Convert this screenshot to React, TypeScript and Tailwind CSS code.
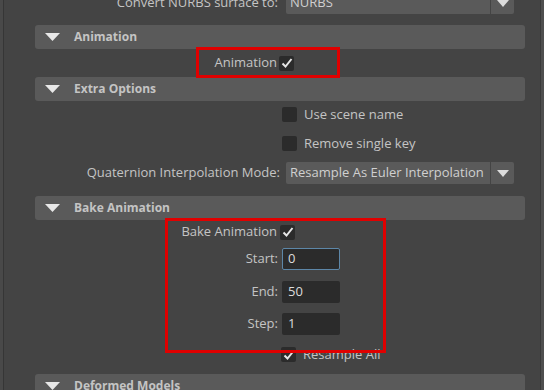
import * as React from "react";

const Check: React.FC<{ checked?: boolean }> = ({ checked }) => (
  <div className="w-[15px] h-[15px] shrink-0 rounded-[2px] bg-[#2b2b2b] flex items-center justify-center">
    {checked && (
      <svg width="12" height="12" viewBox="0 0 12 12">
        <path d="M1.5 6.5 L4.5 9.5 L10.5 2" stroke="#e6e6e6" strokeWidth="2" fill="none" />
      </svg>
    )}
  </div>
);

const Header: React.FC<{ title: string }> = ({ title }) => (
  <div className="h-[24px] bg-[#5a5a5a] rounded-[3px] flex items-center ml-[31px] mr-[15px]">
    <svg width="15" height="8" viewBox="0 0 15 8" className="ml-[10px]">
      <path d="M0 0 L15 0 L7.5 8 Z" fill="#e8e8e8" />
    </svg>
    <span className="ml-[14px] font-bold text-[12px] text-[#c4c4c4]">{title}</span>
  </div>
);

const Dropdown: React.FC<{ value: string }> = ({ value }) => (
  <div className="flex gap-[1px]">
    <div className="w-[204px] h-[22px] bg-[#5a5a5a] rounded-l-[2px] flex items-center px-[4px] text-[13px] text-[#d0d0d0] whitespace-nowrap overflow-hidden">
      {value}
    </div>
    <div className="w-[23px] h-[22px] bg-[#5a5a5a] rounded-r-[2px] flex items-center justify-center">
      <svg width="12" height="7" viewBox="0 0 12 7">
        <path d="M0 0 L12 0 L6 7 Z" fill="#dcdcdc" />
      </svg>
    </div>
  </div>
);

const Field: React.FC<{ label: string; value: string; focus?: boolean; top: string }> = ({ label, value, focus, top }) => (
  <div className={"flex items-center h-[22px] " + top}>
    <div className="w-[274px] text-right text-[13px] text-[#c4c4c4]">{label}</div>
    <div
      className={
        focus
          ? "ml-[4px] w-[58px] h-[22px] bg-[#2b2b2b] rounded-[2px] border border-[#5d87a8] flex items-center px-[5px] text-[13px] text-[#dcdcdc]"
          : "ml-[4px] w-[58px] h-[22px] bg-[#2b2b2b] rounded-[2px] flex items-center px-[6px] text-[13px] text-[#dcdcdc]"
      }
    >
      {value}
    </div>
  </div>
);

const App: React.FC = () => {
  return (
    <div
      className="relative w-[544px] h-[390px] overflow-hidden bg-[#444444] flex"
      style={{ fontFamily: '"Open Sans", "Noto Sans", sans-serif' }}
    >
      <div className="w-[4px] shrink-0 bg-[#494949] border-r border-[#363636]" />
      <div className="flex-1 flex flex-col *:shrink-0">
        <div className="flex items-center h-[22px] -mt-[8px]">
          <div className="w-[274px] text-right text-[13px] text-[#c4c4c4]">Convert NURBS surface to:</div>
          <div className="ml-[8px]">
            <Dropdown value="NURBS" />
          </div>
        </div>
        <div className="mt-[11px]">
          <Header title="Animation" />
        </div>
        <div className="flex items-center h-[28px]">
          <div className="w-[273px] text-right text-[13px] text-[#c4c4c4]">Animation</div>
          <div className="ml-[2px]">
            <Check checked />
          </div>
        </div>
        <Header title="Extra Options" />
        <div className="flex items-center h-[15px] mt-[6px] pl-[278px] gap-[7px]">
          <Check />
          <span className="text-[13px] text-[#c4c4c4]">Use scene name</span>
        </div>
        <div className="flex items-center h-[15px] mt-[14px] pl-[278px] gap-[7px]">
          <Check />
          <span className="text-[13px] text-[#c4c4c4]">Remove single key</span>
        </div>
        <div className="flex items-center h-[22px] mt-[11px]">
          <div className="w-[276px] text-right text-[13px] text-[#c4c4c4]">Quaternion Interpolation Mode:</div>
          <div className="ml-[6px]">
            <Dropdown value="Resample As Euler Interpolation" />
          </div>
        </div>
        <div className="mt-[12px]">
          <Header title="Bake Animation" />
        </div>
        <div className="flex items-center h-[24px]">
          <div className="w-[273px] text-right text-[13px] text-[#c4c4c4]">Bake Animation</div>
          <div className="ml-[3px]">
            <Check checked />
          </div>
        </div>
        <Field label="Start:" value="0" focus top="mt-[4px]" />
        <Field label="End:" value="50" top="mt-[11px]" />
        <Field label="Step:" value="1" top="mt-[10px]" />
        <div className="flex items-center h-[15px] mt-[12px] pl-[277px] gap-[7px]">
          <Check checked />
          <span className="text-[13px] text-[#c4c4c4]">Resample All</span>
        </div>
        <div className="mt-[12px]">
          <Header title="Deformed Models" />
        </div>
      </div>
      <div className="w-[4px] shrink-0 bg-[#4e4e4e] border-l border-[#3a3a3a]" />

      <div className="absolute left-[196px] top-[47px] w-[144px] h-[31px] border-[3px] border-[#e00000]" />
      <div className="absolute left-[165px] top-[218px] w-[221px] h-[135px] border-[3px] border-[#e00000]" />
    </div>
  );
};

export default App;
